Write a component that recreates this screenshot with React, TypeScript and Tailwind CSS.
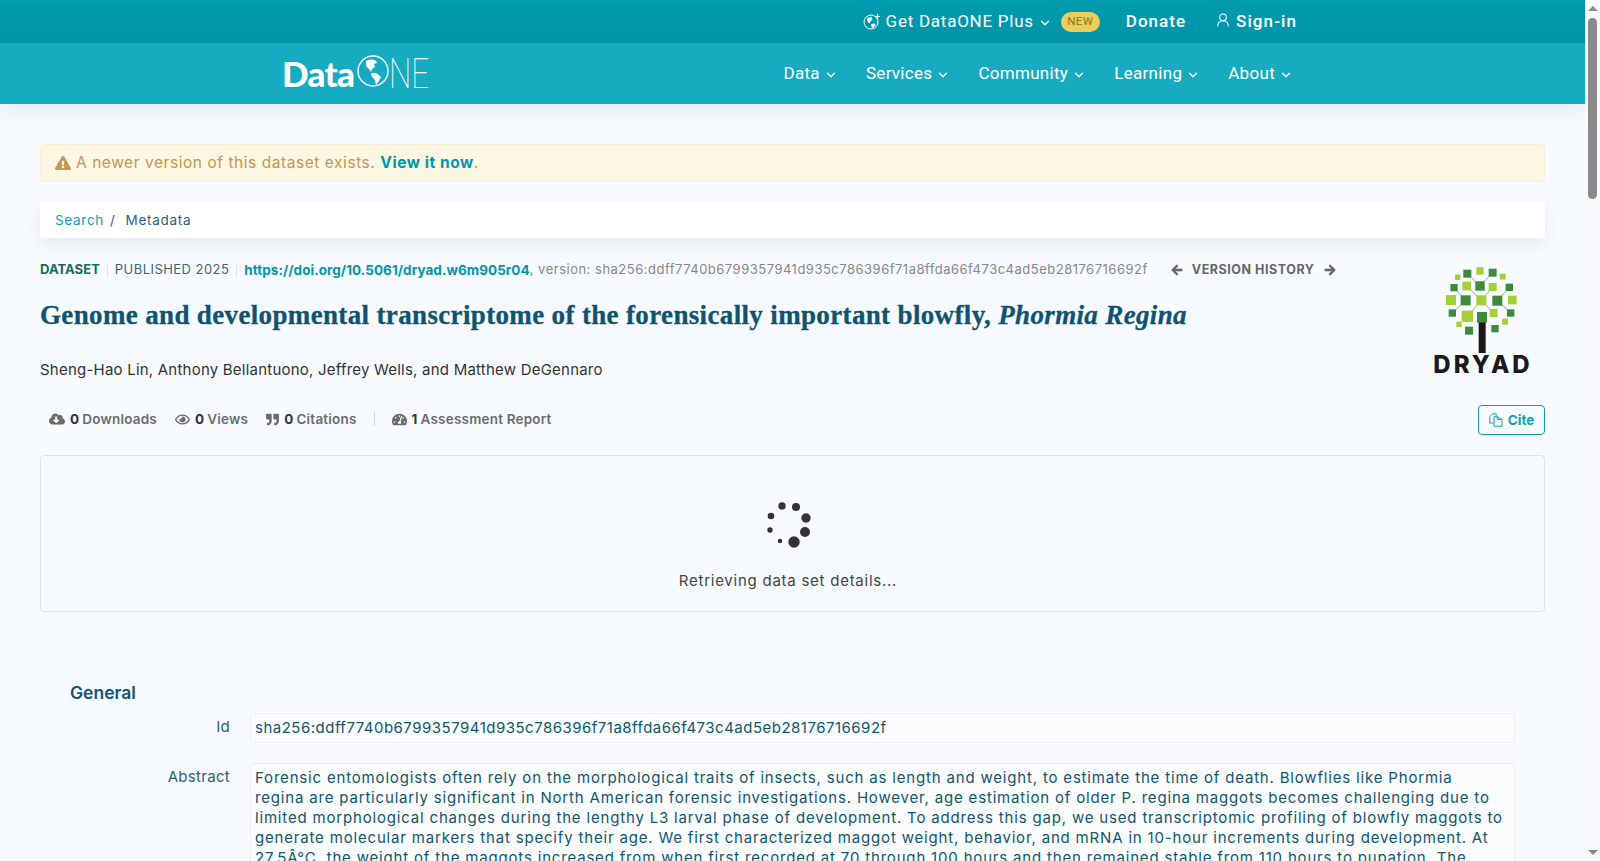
import { ChevronDown, UserRound } from "lucide-react";
import {
  FaArrowLeft,
  FaArrowRight,
  FaCloudDownloadAlt,
  FaExclamationTriangle,
  FaQuoteRight,
  FaRegEye,
  FaTachometerAlt,
} from "react-icons/fa";

const navItems = ["Data", "Services", "Community", "Learning", "About"];

const abstractLines = [
  "Forensic entomologists often rely on the morphological traits of insects, such as length and weight, to estimate the time of death. Blowflies like Phormia",
  "regina are particularly significant in North American forensic investigations. However, age estimation of older P. regina maggots becomes challenging due to",
  "limited morphological changes during the lengthy L3 larval phase of development. To address this gap, we used transcriptomic profiling of blowfly maggots to",
  "generate molecular markers that specify their age. We first characterized maggot weight, behavior, and mRNA in 10-hour increments during development. At",
  "27.5Â°C, the weight of the maggots increased from when first recorded at 70 through 100 hours and then remained stable from 110 hours to pupation. The",
];

const darkSquares = [
  [1042, 72, 24], [1118, 69, 24], [1080, 109, 28], [1002, 114, 22], [1168, 113, 22], [1037, 152, 30],
  [1132, 153, 30], [997, 190, 22], [1172, 190, 22], [1047, 243, 24], [1125, 237, 22],
];
const lightSquares = [
  [1080, 64, 22], [1013, 83, 16], [1148, 81, 18], [1040, 109, 26], [1118, 112, 24], [993, 151, 30],
  [1177, 151, 26], [1084, 152, 30], [1042, 200, 34], [1121, 190, 24], [1155, 216, 18], [1017, 224, 16],
];
const branches = [
  "M1084 152 L1042 200", "M1084 152 L1121 190", "M1084 152 L1040 109", "M1084 152 L1118 112", "M1080 109 L1042 72",
  "M1080 109 L1118 69", "M1002 114 L1037 152", "M1168 113 L1132 153", "M997 190 L1037 152", "M1172 190 L1132 153",
];
const spinnerDots = [
  [-6, -18, 3.7], [8, -17, 4], [18, -6, 4.7], [17, 8, 5], [6, 18, 5.7], [-8, 17, 2.3], [-18, 6, 2.7], [-17, -8, 3.3],
];

const DataOneLogo = () => (
  <div className="flex h-[36px] items-center text-white">
    <span className="font-['Lato'] text-[35px] font-black leading-none tracking-[-0.7px]">Data</span>
    <svg width="32" height="32" viewBox="0 0 32 32" className="ml-[3px] -mt-[6px]">
      <circle cx="16" cy="16" r="15" fill="none" stroke="white" strokeWidth="1.4" />
      <path d="M9 6 C12 4 17 4 19 6 L20 8 L17 9 L18 12 L15 14 L14 17 L12 14 L9 11 Z" fill="white" />
      <path d="M14 18 L19 18 L24 22 L22 26 L19 30 L18 25 L15 22 Z" fill="white" />
    </svg>
    <span className="w-[41px] origin-left scale-x-[0.75] font-['Roboto'] text-[42px] font-thin leading-none">NE</span>
  </div>
);

const DryadLogo = () => (
  <svg width="110" height="118" viewBox="930 40 330 354" className="mt-[5px] mr-[5px] shrink-0">
    {branches.map((d) => (
      <path key={d} d={d} stroke="#8cbb5a" strokeWidth="3" />
    ))}
    {darkSquares.map(([x, y, s]) => (
      <rect key={`d${x}${y}`} x={x - s / 2} y={y - s / 2} width={s} height={s} fill="#3d8a3c" />
    ))}
    {lightSquares.map(([x, y, s]) => (
      <rect key={`l${x}${y}`} x={x - s / 2} y={y - s / 2} width={s} height={s} fill="#a5cf39" />
    ))}
    <rect x="1071" y="187" width="30" height="32" fill="#3d8a3c" />
    <rect x="1076" y="218" width="21" height="92" fill="#1a1a1a" />
    <text x="1089" y="369" textAnchor="middle" fontFamily="Inter" fontWeight="800" fontSize="72" letterSpacing="9" fill="#1a1a1a">
      DRYAD
    </text>
  </svg>
);

const PlusGlobe = () => (
  <svg width="18" height="17" viewBox="0 0 18 17" fill="none" className="mr-[5px]">
    <circle cx="8" cy="9" r="7" stroke="white" strokeWidth="1" />
    <path d="M4 5 L8.5 4 L9.5 6.5 L7.5 8.5 L6.5 10.5 L4.5 8.5 Z" fill="white" />
    <path d="M8 11 L12 10.5 L12.5 12 L10 15 L8.5 14 Z" fill="white" />
    <path d="M14.5 1 V6 M12 3.5 H17" stroke="white" strokeWidth="1.2" />
  </svg>
);

const Spinner = () => (
  <svg width="48" height="48" viewBox="-24 -24 48 48">
    {spinnerDots.map(([x, y, r]) => (
      <circle key={`${x}${y}`} cx={x} cy={y} r={r} fill="#333" />
    ))}
  </svg>
);

const Metric = ({ icon, count, label }: { icon: React.ReactNode; count: string; label: string }) => (
  <div className="flex items-center text-[13.5px] font-semibold tracking-[0.2px] text-[#6b6b6b]">
    {icon}
    <span className="ml-[5px] font-bold text-[#333]">{count}</span>
    <span className="ml-[3px]">{label}</span>
  </div>
);

const App = () => {
  return (
    <div className="flex h-[861px] overflow-hidden bg-[#f9f9f9] font-['Inter',sans-serif]">
      <div className="w-[1585px] shrink-0 overflow-hidden bg-[#f7fbff]">
        <header className="shadow-[0_6px_24px_rgba(0,0,0,0.08)]">
          <div className="flex h-[43px] items-center justify-end bg-gradient-to-b from-[#009bb0] to-[#0094a9] pr-[288px] font-['Roboto'] text-white">
            <div className="flex items-center text-[17px] tracking-[0.75px]">
              <PlusGlobe />
              Get DataONE Plus
              <ChevronDown size={14} strokeWidth={2.2} className="ml-[4px] mt-[2px]" />
            </div>
            <span className="ml-[9px] flex h-[20px] w-[39px] items-center justify-center rounded-full bg-[#edcd5b] text-[11.5px] tracking-[0.5px] text-[#8a7426]">
              NEW
            </span>
            <span className="ml-[26px] text-[17px] font-medium tracking-[1px]">Donate</span>
            <span className="ml-[29px] flex items-center text-[17px] font-medium tracking-[1.1px]">
              <UserRound size={16} strokeWidth={1.6} className="mr-[5px] -mt-[3px]" />
              Sign-in
            </span>
          </div>
          <div className="flex h-[61px] items-center justify-between bg-[#16abc0] pl-[282px] pr-[292px] font-['Roboto'] text-white">
            <DataOneLogo />
            <nav className="flex items-center gap-[28px] text-[17px] tracking-[0.3px]">
              {navItems.map((item) => (
                <div key={item} className="flex items-center">
                  {item}
                  <ChevronDown size={14} strokeWidth={2.2} className="ml-[4px] mt-[2px]" />
                </div>
              ))}
            </nav>
          </div>
        </header>

        <main className="px-[40px] pt-[40px]">
          <div className="flex h-[38px] items-center rounded-[4px] border border-[#fbeed5] bg-[#fdf6e3] pl-[14px] text-[15.5px] tracking-[0.55px] text-[#c09853]">
            <FaExclamationTriangle size={16} className="mr-[5px]" />
            A newer version of this dataset exists.
            <a className="ml-[5px] font-bold text-[#0097ac]">View it now</a>.
          </div>

          <div className="mt-[20px] flex h-[36px] items-center rounded-[4px] bg-white pl-[15px] text-[13.5px] tracking-[0.7px] shadow-[0_6px_16px_rgba(0,40,60,0.08)]">
            <a className="text-[#0fa0b5]">Search</a>
            <span className="ml-[6px] text-[#555]">/</span>
            <span className="ml-[10px] text-[#2f6079]">Metadata</span>
          </div>

          <div className="mt-[20px] flex justify-between">
            <div>
              <div className="flex h-[24px] items-center text-[13px]">
                <span className="font-bold tracking-[0.05px] text-[#156b63]">DATASET</span>
                <span className="mx-[7px] h-[14px] w-px bg-[#dfe5e8]" />
                <span className="tracking-[0.45px] text-[#3f6378]">PUBLISHED 2025</span>
                <span className="mx-[7px] h-[14px] w-px bg-[#dfe5e8]" />
                <a className="text-[13.5px] font-bold tracking-[0.05px] text-[#0097ac]">https://doi.org/10.5061/dryad.w6m905r04</a>
                <span className="text-[13px] tracking-[0.5px] text-[#888]">
                  , version: sha256:ddff7740b6799357941d935c786396f71a8ffda66f473c4ad5eb28176716692f
                </span>
                <span className="ml-[23px] flex items-center text-[12.5px] font-bold tracking-[0.55px] text-[#666]">
                  <FaArrowLeft size={12} stroke="currentColor" strokeWidth={30} className="mr-[9px]" />
                  VERSION HISTORY
                  <FaArrowRight size={12} stroke="currentColor" strokeWidth={30} className="ml-[9px]" />
                </span>
              </div>
              <h1 className="mt-[17px] font-['Liberation_Serif'] text-[27px] font-bold leading-[32px] tracking-[0.35px] text-[#0f5370] [-webkit-text-stroke:0.3px]">
                Genome and developmental transcriptome of the forensically important blowfly, <em>Phormia Regina</em>
              </h1>
              <p className="mt-[28px] text-[15px] leading-[22px] tracking-[0.22px] text-[#333]">
                Sheng-Hao Lin, Anthony Bellantuono, Jeffrey Wells, and Matthew DeGennaro
              </p>
            </div>
            <DryadLogo />
          </div>

          <div className="mt-[24px] flex h-[30px] items-center justify-between">
            <div className="mb-[2px] flex items-center pl-[9px]">
              <Metric icon={<FaCloudDownloadAlt size={16} />} count="0" label="Downloads" />
              <div className="ml-[18px]">
                <Metric icon={<FaRegEye size={15} />} count="0" label="Views" />
              </div>
              <div className="ml-[18px]">
                <Metric icon={<FaQuoteRight size={13} />} count="0" label="Citations" />
              </div>
              <span className="ml-[17px] mr-[17px] h-[14px] w-px bg-[#cfd4d6]" />
              <Metric icon={<FaTachometerAlt size={15} />} count="1" label="Assessment Report" />
            </div>
            <button className="flex h-[30px] w-[67px] items-center justify-center rounded-[4px] border border-[#0fa0b5] text-[13.5px] font-bold text-[#0fa0b5]">
              <svg width="14" height="14" viewBox="0 0 14 14" fill="none" stroke="currentColor" strokeWidth="1" className="mr-[5px]">
                <path d="M4.5 10H.8V3.5L3.5.8h3.7v2.4" />
                <path d="M5 3.7h3.2V6.5H13V13.2H5Z" />
                <path d="M8.2 3.7 13 6.5" />
              </svg>
              Cite
            </button>
          </div>

          <div className="mt-[20px] flex h-[157px] flex-col items-center rounded-[4px] border border-[#dfe3e6] pr-[9px]">
            <div className="mt-[44px]">
              <Spinner />
            </div>
            <p className="mt-[22px] text-[15px] tracking-[0.75px] text-[#444]">Retrieving data set details...</p>
          </div>

          <h2 className="mt-[69px] pl-[30px] text-[17.5px] font-semibold leading-[24px] text-[#12566e]">General</h2>

          <div className="mt-[8px] flex">
            <div className="w-[190px] pt-[3px] text-right text-[15px] leading-[22px] tracking-[0.3px] text-[#2f6079]">Id</div>
            <div className="ml-[20px] mr-[30px] flex h-[30px] flex-1 items-center rounded-[4px] border border-[#eceff1] bg-[#fbfcfd] pl-[4px] text-[15px] tracking-[0.49px] text-[#12566e]">
              sha256:ddff7740b6799357941d935c786396f71a8ffda66f473c4ad5eb28176716692f
            </div>
          </div>

          <div className="mt-[20px] flex">
            <div className="w-[190px] pt-[3px] text-right text-[15px] leading-[22px] tracking-[0.3px] text-[#2f6079]">Abstract</div>
            <div className="ml-[20px] mr-[30px] flex-1 rounded-[4px] border border-[#eceff1] bg-[#fbfcfd] pl-[4px] pr-[6px] pt-[4px] text-[15px] leading-[20px] tracking-[0.82px] text-[#12566e]">
              {abstractLines.map((line) => (
                <div key={line} className="whitespace-nowrap">
                  {line}
                </div>
              ))}
            </div>
          </div>
        </main>
      </div>

      <div className="flex w-[15px] shrink-0 flex-col items-center bg-[#f9f9f9]">
        <div className="mt-[6px] h-0 w-0 border-x-[5px] border-b-[5px] border-x-transparent border-b-[#8a8a8a]" />
        <div className="mt-[7px] h-[181px] w-[9px] rounded-full bg-[#8a8a8a]" />
        <div className="mt-auto mb-[6px] h-0 w-0 border-x-[5px] border-t-[5px] border-x-transparent border-t-[#8a8a8a]" />
      </div>
    </div>
  );
};

export default App;
